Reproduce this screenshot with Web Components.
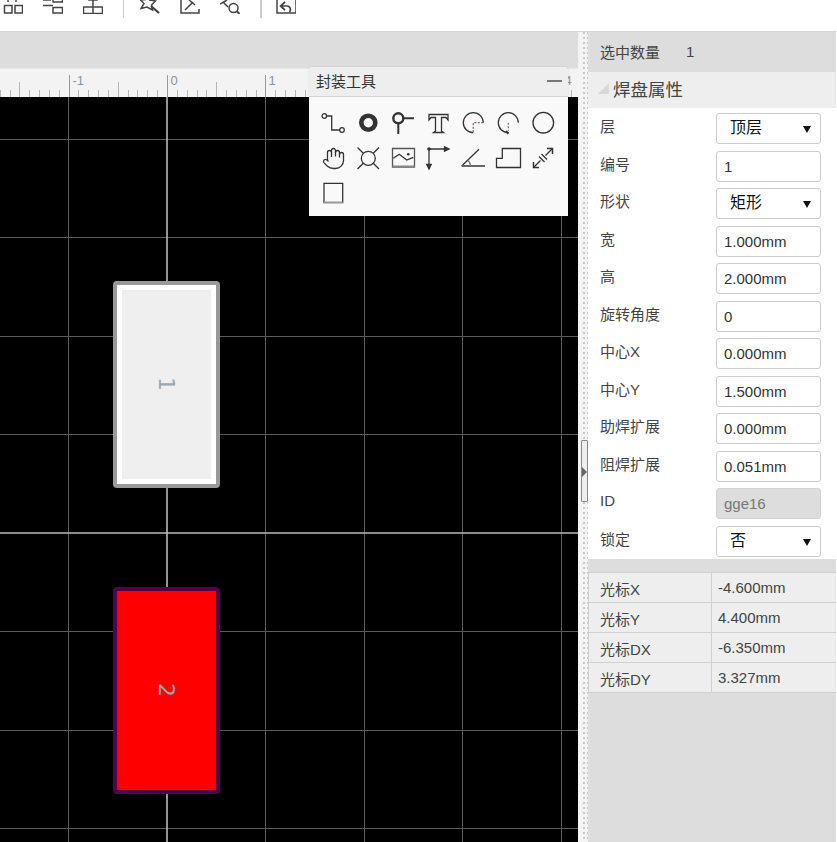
<!DOCTYPE html>
<html lang="zh">
<head>
<meta charset="utf-8">
<title>封装工具</title>
<style>
  html, body { margin: 0; padding: 0; background: #fff; }
  body { width: 837px; height: 842px; overflow: hidden; font-family: "Liberation Sans", "Noto Sans CJK SC", sans-serif; font-size: 15px; color: #333; }
</style>
</head>
<body>
<eda-app></eda-app>
<script>
const TOP_ICONS = {
  groupA: '<path d="M1.500 5.500h7.500v7.500H1.500zM12 5.500h7.500v7.500H12z"/><path d="M5 0v2M13 0v2" />',
  groupB: '<path d="M0 5.500h10M10 -3h9.500v5H10zM10 7.500h9.500v5.500H10z"/><path d="M0 0h8" />',
  groupC: '<path d="M6 -4h8v4H6zM10 0v7M.5 7h9.500v6.500H.5zM10 7h9.500v6.500H10z"/>',
  star: '<path d="M7 -6l2.500 6 6 1-4 4 1 5-5.500-3-6 1.500 3-5-3.500-3.500 5-.5z"/><path d="M11 6l8 7" stroke-width="2.200"/>',
  frame: '<path d="M1 0v13h18V9"/><path d="M5 10l8-8M9 0l6 5"/>',
  search: '<path d="M0 4l7-4M3 2l5 5"/><circle cx="13.500" cy="8" r="4.500"/><path d="M17 11.500l2.500 2.500" stroke-width="2"/>',
  undo: '<path d="M1 -3h19v16H1z"/><path d="M9 2L4.500 6 9 10M5 6h6a3.500 3.500 0 0 1 3.500 3.500c0 1-.5 1.500-1 2.500" stroke-width="1.700"/>'
};

const TOOL_ICONS = [
  '<circle cx="3.300" cy="5" r="2.300"/><path d="M5.600 5h5.100v14H18.500"/><circle cx="21" cy="19" r="2.300"/>',
  '<circle cx="12.300" cy="11.700" r="7" stroke="#333" stroke-width="4.600"/>',
  '<circle cx="7.300" cy="7.300" r="5" stroke-width="2.400"/><path d="M12.300 7.300H23M7.300 12.300V23" stroke-width="2"/>',
  '<path d="M3 3.500h19V9l-2-2.500h-4.500V20l2 1.500h-10l2-1.500V6.500H5L3 9z"/>',
  '<path d="M22.300 11.700A10 10 0 1 0 12.300 21.700"/><path d="M22.300 11.700h-10v10" stroke="#8a5a8a" stroke-dasharray="2 1.500"/>',
  '<path d="M22.300 11.700A10 10 0 1 0 12.300 21.700"/><path d="M12.300 11.700v8" stroke="#777" stroke-dasharray="2 1.500"/><path d="M10 20l2.300 1.700-1 1.500" />',
  '<circle cx="12.300" cy="11.700" r="10.300"/>',
  '<g transform="translate(.5 .5)"><path d="M18 11V6a2 2 0 0 0-2-2 2 2 0 0 0-2 2"/><path d="M14 10V4a2 2 0 0 0-2-2 2 2 0 0 0-2 2v2"/><path d="M10 10.500V6a2 2 0 0 0-2-2 2 2 0 0 0-2 2v8"/><path d="M18 8a2 2 0 1 1 4 0v6a8 8 0 0 1-8 8h-2c-2.800 0-4.500-.86-6-2.300l-3.600-3.600a2 2 0 0 1 2.800-2.800L7 15"/></g>',
  '<circle cx="12.300" cy="12.300" r="7"/><path d="M1.500 1.500l5.800 5.800M23 1.500l-5.700 5.800M1.500 23l5.800-5.800M23 23l-5.700-5.800"/>',
  '<path d="M1.500 2.500h22v18.500h-22z" stroke="#555"/><path d="M1.500 20.500h22" stroke="#888" stroke-width="2"/><path d="M2.300 12.300l6-4 7.400 5.700 6.600-2.700"/><circle cx="17.300" cy="8.300" r="1.300" fill="#333" stroke="none"/>',
  '<circle cx="3" cy="3" r="1.800" fill="#333" stroke="none"/><path d="M3 3h17M3 3v18"/><path d="M18.500 .8L23 3l-4.500 2.200zM.8 18.500L3 23l2.200-4.500z" fill="#333"/>',
  '<path d="M.7 20L18 3.300"/><path d="M.7 20H24" stroke="#666" stroke-width="1.800"/><path d="M7 14q2.500 3 2.500 6" stroke="#777"/>',
  '<path d="M.5 12.300h5.800V2.500h18.200v19H.5z"/>',
  '<path d="M2.500 21.500l7-7M14.500 9.500l7-7"/><path d="M8 10.500l5.500 5.500M10.500 8l5.500 5.500"/><path d="M2.500 16v5.500H8M16 2.500h5.500V8" stroke-width="1.500"/>',
  '<path d="M3 2.300h18.700v19.400H3z"/><path d="M3 21.200h18.700" stroke="#999" stroke-width="1.500"/>'
];

class EdaToolbar extends HTMLElement {
  connectedCallback() {
    this.attachShadow({ mode: "open" });
    const svg = (name) => `<svg viewBox="0 0 20 14" width="20" height="14">${TOP_ICONS[name]}</svg>`;
    this.shadowRoot.innerHTML = `
      <style>
        :host { display: flex; align-items: flex-start; height: 31px; padding-left: 3px; background: #fff; border-bottom: 1px solid #d6d6d6; overflow: hidden; }
        svg { display: block; flex: none; overflow: hidden; margin-right: 20px; fill: none; stroke: #444; stroke-width: 1.500; }
        i { display: block; flex: none; height: 18px; }
        .thin { width: 1px; background: #ccc; margin-right: 16px; }
        .wide { width: 2px; background: #ccc; margin-right: 14px; }
      </style>
      ${svg("groupA")}${svg("groupB")}${svg("groupC")}
      <i class="thin"></i>
      ${svg("star")}${svg("frame")}${svg("search")}
      <i class="wide"></i>
      ${svg("undo")}
    `;
  }
}

class EdaRuler extends HTMLElement {
  connectedCallback() {
    this.attachShadow({ mode: "open" });
    let ticks = "";
    let labels = "";
    const step = 98.43;
    const zero = 167;
    for (let i = -20; i <= 60; i++) {
      const x = Math.round(zero + i * step / 10) + 0.5;
      if (x < 0 || x > 578) continue;
      const h = i % 10 === 0 ? 22 : (i % 5 === 0 ? 15 : 7);
      const col = i % 10 === 0 ? "#999" : "#b4b4b4";
      ticks += `<path d="M${x} 28V${28 - h}" stroke="${col}"/>`;
      // 2 and 3 sit behind the tool panel
      if (i % 10 === 0 && i !== 20 && i !== 30) labels += `<text x="${x + 3}" y="16">${i / 10}</text>`;
    }
    this.shadowRoot.innerHTML = `
      <style>
        :host { display: block; height: 29px; background: #f3f3f3; border-top: 1px solid #e6e6e6; box-sizing: border-box; overflow: hidden; }
        svg { display: block; }
        text { font: 13px "Liberation Sans", sans-serif; fill: #8b95a1; }
      </style>
      <svg width="578" height="28">${ticks}${labels}</svg>
    `;
  }
}

class EdaPad extends HTMLElement {
  connectedCallback() {
    this.attachShadow({ mode: "open" });
    this.shadowRoot.innerHTML = `
      <style>
        :host { position: absolute; display: block; box-sizing: border-box; width: 107px; border: 4px solid #999; border-radius: 4px; }
        :host([kind="top"]) { background: rgba(255,255,255,.97); }
        :host([kind="bottom"]) { background: #f00; border-color: #50004e; }
        .inner { box-sizing: border-box; height: 100%; display: flex; align-items: center; justify-content: center; }
        :host([kind="top"]) .inner { background: #efefef; background-clip: padding-box; border: 5px solid #fff; }
        span { display: block; transform: translate(-1px, -1px) rotate(90deg); font: 22px "DejaVu Sans", sans-serif; color: #a0a6ae; line-height: 1; }
      </style>
      <div class="inner"><span><slot></slot></span></div>
    `;
  }
}

class EdaCanvas extends HTMLElement {
  connectedCallback() {
    this.attachShadow({ mode: "open" });
    let lines = "";
    [68, 265, 364, 462, 561].forEach((x) => { lines += `<path d="M${x}.5 0V745" stroke="#5a5a5a"/>`; });
    [42, 140, 239, 337, 534, 633, 731].forEach((y) => { lines += `<path d="M0 ${y}.5H578" stroke="#5a5a5a"/>`; });
    lines += `<path d="M167 0V745" stroke="#bbb" stroke-width="1.600"/><path d="M0 436H578" stroke="#bbb" stroke-width="1.600"/>`;
    this.shadowRoot.innerHTML = `
      <style>
        :host { display: block; position: relative; flex: 1; background: #000; overflow: hidden; }
        svg { position: absolute; left: 0; top: 0; }
      </style>
      <svg width="578" height="745">${lines}</svg>
      <slot></slot>
    `;
  }
}

class ToolPanel extends HTMLElement {
  connectedCallback() {
    this.attachShadow({ mode: "open" });
    const cells = TOOL_ICONS.map((d) => `<div class="cell"><svg viewBox="0 0 24 24" width="24" height="24">${d}</svg></div>`).join("");
    this.shadowRoot.innerHTML = `
      <style>
        :host { position: absolute; left: 309px; top: 35px; display: block; width: 259px; height: 149px; background: #f9f9f9; border-radius: 4px 4px 0 0; box-shadow: 0 0 2px rgba(0,0,0,.12); color: #333; overflow: hidden; }
        .title { display: flex; align-items: center; justify-content: space-between; height: 26px; padding: 0 6px 3px 7px; background: #eee; border-bottom: 1px solid #d2d2d2; font-size: 15px; }
        .dash { width: 15px; height: 2px; background: #777; margin-top: 2px; }
        .grid { display: grid; grid-template-columns: repeat(7, 35px); grid-auto-rows: 35px; padding: 8px 0 0 6px; }
        .cell { display: flex; align-items: center; justify-content: center; }
        svg { display: block; overflow: visible; fill: none; stroke: #333; stroke-width: 1.300; }
      </style>
      <div class="title"><span>封装工具</span><div class="dash"></div></div>
      <div class="grid">${cells}</div>
    `;
  }
}

class EdaSplitter extends HTMLElement {
  connectedCallback() {
    this.attachShadow({ mode: "open" });
    this.shadowRoot.innerHTML = `
      <style>
        :host { position: relative; display: block; flex: none; width: 10px; background-color: #f4f4f4; background-image: linear-gradient(#c9c9c9 2px, transparent 2px), linear-gradient(#c9c9c9 2px, transparent 2px); background-size: 2px 5px, 1px 5px; background-position: 5px 0, 9px 0; background-repeat: repeat-y; }
        .handle { position: absolute; left: 3px; top: 408px; width: 7px; height: 62px; box-sizing: border-box; border: 1px solid #8a8a8a; background: #eee; border-radius: 1px; }
        .arrow { position: absolute; left: 0; top: 26px; width: 0; height: 0; border-left: 5px solid #666; border-top: 5px solid transparent; border-bottom: 5px solid transparent; }
      </style>
      <div class="handle"><div class="arrow"></div></div>
    `;
  }
}

class PropRow extends HTMLElement {
  connectedCallback() {
    this.attachShadow({ mode: "open" });
    const kind = this.getAttribute("kind") || "input";
    const arrow = kind === "select" ? '<b></b>' : "";
    this.shadowRoot.innerHTML = `
      <style>
        :host { display: flex; align-items: center; justify-content: space-between; height: 31px; padding: 0 15px 0 12px; font-size: 15px; }
        label { color: #444; margin-top: -6px; }
        .ctl { position: relative; box-sizing: border-box; width: 105px; height: 31px; line-height: 29px; padding: 0 0 0 7px; background: #fff; border: 1px solid #ccc; border-radius: 3px; color: #333; font-size: 15px; }
        :host([kind="select"]) .ctl { padding: 0 0 0 13px; line-height: 27px; font-size: 16px; color: #111; }
        :host([kind="disabled"]) .ctl { background: #ddd; border-color: #d2d2d2; color: #777; }
        b { position: absolute; right: 9px; top: 12px; width: 0; height: 0; border-left: 4px solid transparent; border-right: 4px solid transparent; border-top: 7px solid #111; }
      </style>
      <label>${this.getAttribute("label")}</label>
      <div class="ctl">${this.getAttribute("value")}${arrow}</div>
    `;
  }
}

class CursorTable extends HTMLElement {
  connectedCallback() {
    this.attachShadow({ mode: "open" });
    const rows = [["光标X", "-4.600mm"], ["光标Y", "4.400mm"], ["光标DX", "-6.350mm"], ["光标DY", "3.327mm"]]
      .map(([k, v]) => `<div class="k">${k}</div><div class="v">${v}</div>`).join("");
    this.shadowRoot.innerHTML = `
      <style>
        :host { display: grid; grid-template-columns: 123px 1fr; grid-auto-rows: 30px; margin-top: 13px; border-top: 1px solid #d0d0d0; border-left: 1px solid #d0d0d0; background: #eee; font-size: 15px; color: #444; }
        div { box-sizing: border-box; border-bottom: 1px solid #d0d0d0; display: flex; align-items: center; }
        .k { padding: 2px 0 0 11px; border-right: 1px solid #d0d0d0; }
        .v { padding: 0 0 1px 6px; }
      </style>
      ${rows}
    `;
  }
}

class PropPanel extends HTMLElement {
  connectedCallback() {
    this.attachShadow({ mode: "open" });
    this.shadowRoot.innerHTML = `
      <style>
        :host { display: block; flex: none; width: 248px; background: #ddd; }
        .count { display: flex; align-items: center; box-sizing: border-box; height: 40px; padding: 0 0 2px 12px; color: #444; font-size: 15px; }
        .count span { width: 86px; }
        .head { position: relative; height: 36px; line-height: 36px; padding-left: 25px; background: #eee; font-size: 17.500px; color: #444; }
        .head::before { content: ""; position: absolute; left: 10px; top: 11px; width: 0; height: 0; border-left: 11px solid transparent; border-bottom: 11px solid #d8d8d8; }
        .body { display: flex; flex-direction: column; gap: 6.500px; padding: 5px 0 2.500px; background: #fff; }
      </style>
      <div class="count"><span>选中数量</span>1</div>
      <div class="head">焊盘属性</div>
      <div class="body"><slot></slot></div>
      <cursor-table></cursor-table>
    `;
  }
}

class EdaApp extends HTMLElement {
  connectedCallback() {
    this.attachShadow({ mode: "open" });
    this.shadowRoot.innerHTML = `
      <style>
        :host { display: flex; flex-direction: column; width: 836px; height: 842px; overflow: hidden; }
        .main { position: relative; flex: 1; display: flex; min-height: 0; }
        .left { display: flex; flex-direction: column; width: 578px; flex: none; }
        .band { height: 36px; flex: none; background: #ddd; }
      </style>
      <eda-toolbar></eda-toolbar>
      <div class="main">
        <div class="left">
          <div class="band"></div>
          <eda-ruler></eda-ruler>
          <eda-canvas>
            <eda-pad kind="top" style="left:113px;top:184px;height:207px">1</eda-pad>
            <eda-pad kind="bottom" style="left:113px;top:490px;height:207px">2</eda-pad>
          </eda-canvas>
        </div>
        <eda-splitter></eda-splitter>
        <prop-panel>
          <prop-row label="层" kind="select" value="顶层"></prop-row>
          <prop-row label="编号" value="1"></prop-row>
          <prop-row label="形状" kind="select" value="矩形"></prop-row>
          <prop-row label="宽" value="1.000mm"></prop-row>
          <prop-row label="高" value="2.000mm"></prop-row>
          <prop-row label="旋转角度" value="0"></prop-row>
          <prop-row label="中心X" value="0.000mm"></prop-row>
          <prop-row label="中心Y" value="1.500mm"></prop-row>
          <prop-row label="助焊扩展" value="0.000mm"></prop-row>
          <prop-row label="阻焊扩展" value="0.051mm"></prop-row>
          <prop-row label="ID" kind="disabled" value="gge16"></prop-row>
          <prop-row label="锁定" kind="select" value="否"></prop-row>
        </prop-panel>
        <tool-panel></tool-panel>
      </div>
    `;
  }
}

customElements.define("eda-toolbar", EdaToolbar);
customElements.define("eda-ruler", EdaRuler);
customElements.define("eda-pad", EdaPad);
customElements.define("eda-canvas", EdaCanvas);
customElements.define("tool-panel", ToolPanel);
customElements.define("eda-splitter", EdaSplitter);
customElements.define("prop-row", PropRow);
customElements.define("cursor-table", CursorTable);
customElements.define("prop-panel", PropPanel);
customElements.define("eda-app", EdaApp);
</script>
</body>
</html>
